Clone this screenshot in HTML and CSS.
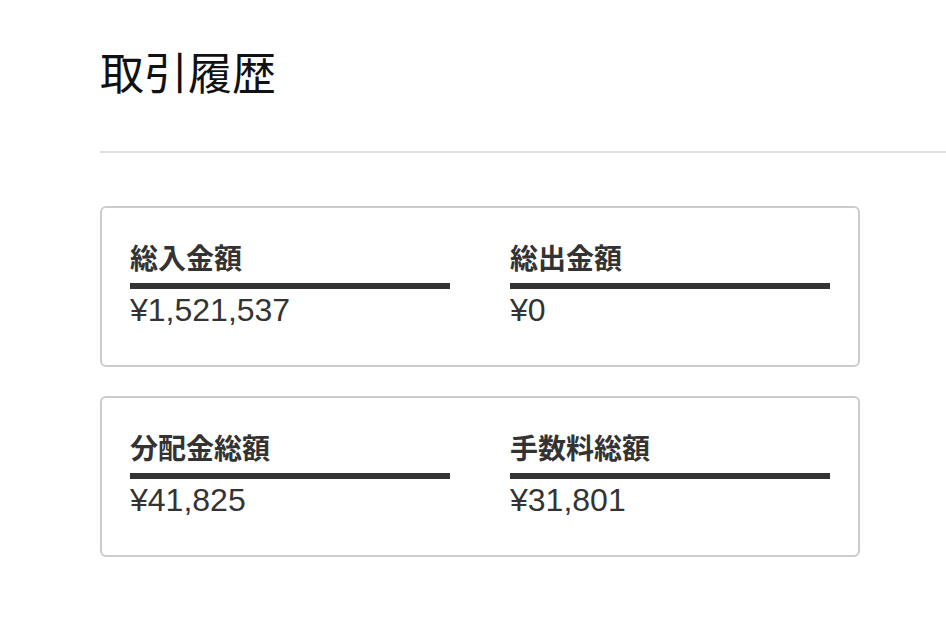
FILE: index.html
```html
<!DOCTYPE html>
<html lang="ja">
<head>
<meta charset="utf-8">
<title>取引履歴</title>
<link rel="stylesheet" href="styles.css">
</head>
<body>
<main class="page">
  <h1 class="title">取引履歴</h1>
  <hr class="divider">
  <section class="card">
    <div class="stat">
      <div class="stat-label">総入金額</div>
      <div class="stat-value">¥1,521,537</div>
    </div>
    <div class="stat">
      <div class="stat-label">総出金額</div>
      <div class="stat-value">¥0</div>
    </div>
  </section>
  <section class="card">
    <div class="stat">
      <div class="stat-label">分配金総額</div>
      <div class="stat-value">¥41,825</div>
    </div>
    <div class="stat">
      <div class="stat-label">手数料総額</div>
      <div class="stat-value">¥31,801</div>
    </div>
  </section>
</main>
</body>
</html>
```
FILE: styles.css
```css
html, body {
  margin: 0;
  padding: 0;
  background: #ffffff;
}
body {
  font-family: "Noto Sans CJK JP", "Noto Sans", sans-serif;
  color: #333333;
}
.page {
  padding: 45px 0 0 100px;
  display: flex;
  flex-direction: column;
  align-items: flex-start;
}
.title {
  margin: 0;
  font-size: 44px;
  line-height: 53px;
  font-weight: 400;
  color: #111111;
}
.divider {
  align-self: stretch;
  margin: 53px 0 0 0;
  border: 0;
  height: 2px;
  background: #e0e0e0;
}
.card {
  box-sizing: border-box;
  width: 760px;
  height: 161px;
  margin-top: 53px;
  border: 2px solid #cccccc;
  border-radius: 6px;
  padding: 30px 28px 0 28px;
  display: grid;
  grid-template-columns: 320px 320px;
  column-gap: 60px;
  align-content: start;
}
.card + .card {
  margin-top: 29px;
}
.stat-label {
  font-size: 28px;
  line-height: 38px;
  font-weight: 700;
  color: #333333;
  padding-bottom: 7px;
  border-bottom: 6px solid #333333;
}
.stat-value {
  font-family: "Liberation Sans", "Noto Sans CJK JP", sans-serif;
  font-size: 32px;
  line-height: 36px;
  padding-top: 3px;
  font-weight: 400;
  color: #333333;
}
```
